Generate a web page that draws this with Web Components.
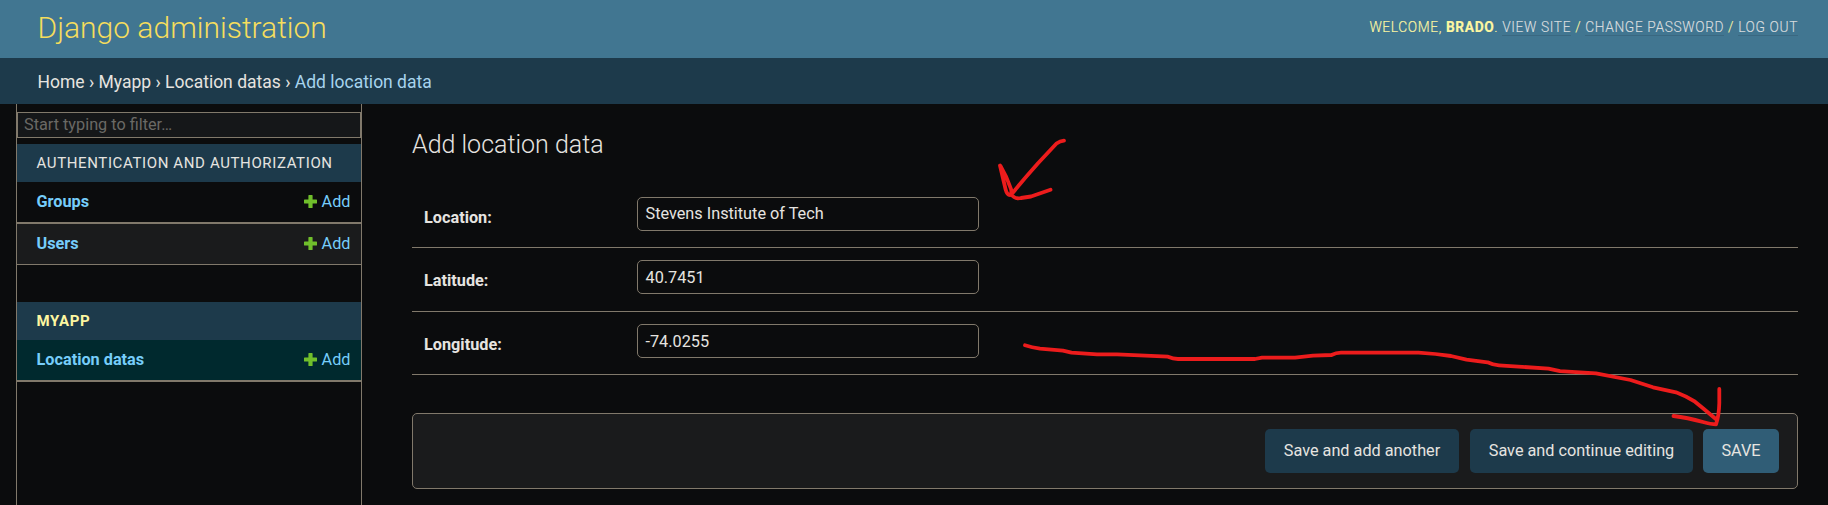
<!DOCTYPE html>
<html lang="en">
<head>
<meta charset="utf-8">
<title>Add location data | Django site admin</title>
<style>
  :root {
    --header: #417691; --bar: #1d3a4b; --body: #0b0c0d; --darker: #1a1b1c;
    --hairline: #81796b; --fg: #e6e4e0; --link: #76cdfa; --accent: #fdf7a1;
  }
  html, body { margin: 0; height: 505px; overflow: hidden; }
  body { background: var(--body); color: var(--fg); font-family: Roboto, "Liberation Sans", sans-serif; font-size: 16.25px; }
</style>
</head>
<body>
<admin-page></admin-page>
<script>
function define(name, markup, setup) {
  const template = document.createElement('template');
  template.innerHTML = markup;
  customElements.define(name, class extends HTMLElement {
    connectedCallback() {
      if (this.shadowRoot) return;
      const root = this.attachShadow({ mode: 'open' });
      root.appendChild(template.content.cloneNode(true));
      if (setup) setup(this, root);
    }
  });
}

define('site-header', `
<style>
  :host { display: flex; justify-content: space-between; height: 58px; padding: 0 30px 0 37.500px; box-sizing: border-box; background: var(--header); }
  h1 { margin: 0; font-size: 30px; line-height: 55px; font-weight: 300; color: #f5dd5d; }
  .tools { font-size: 13.75px; line-height: 55px; letter-spacing: .625px; color: var(--accent); white-space: nowrap; font-weight: 300; -webkit-text-stroke: .15px currentColor; }
  .tools a { color: #d9dddf; border-bottom: 1px solid #3a6881; }
  b { font-weight: 700; }
</style>
<h1>Django administration</h1>
<div class="tools">WELCOME, <b>BRADO</b>. <a>VIEW SITE</a> / <a>CHANGE PASSWORD</a> / <a>LOG OUT</a></div>`);

define('bread-crumbs', `
<style>
  :host { display: block; height: 46px; padding-left: 37.500px; box-sizing: border-box; background: var(--bar); font-size: 17.5px; line-height: 49px; white-space: nowrap; }
  ::slotted(a) { color: var(--fg); }
</style>
<slot></slot>`);

define('model-row', `
<style>
  :host { display: flex; box-sizing: border-box; height: 42px; padding: 0 10.500px 0 19.500px; border-bottom: 2px solid var(--hairline); justify-content: space-between; color: var(--link); line-height: 40px; }
  :host([odd]) { background: var(--darker); height: 41px; border-bottom-width: 1px; }
  :host([current]) { background: #00292e; }
  b { font-weight: 700; }
  .add { display: flex; align-items: center; gap: 5px; }
  svg { display: block; margin-bottom: 2px; }
</style>
<b><slot></slot></b>
<span class="add"><svg width="13" height="13" viewBox="0 0 13 13"><path d="M5 0h3q.6 0 .6.6V4.400h3.800q.6 0 .6.6v3q0 .6-.6.6H8.600v3.800q0 .6-.6.6H5q-.6 0-.6-.6V8.600H.6Q0 8.600 0 8V5q0-.6.6-.6h3.800V.6Q4.400 0 5 0z" fill="#70bf2b"/></svg><span>Add</span></span>`);

define('app-module', `
<style>
  :host { display: block; }
  h2 { margin: 0; height: 38px; padding-left: 19.500px; background: var(--bar); font-size: 15px; line-height: 39px; font-weight: 400; letter-spacing: .625px; white-space: nowrap; }
  :host([current]) h2 { font-weight: 700; color: var(--accent); }
</style>
<h2></h2><slot></slot>`, (host, root) => { root.querySelector('h2').textContent = host.getAttribute('caption'); });

define('nav-sidebar', `
<style>
  :host { display: flex; flex-direction: column; box-sizing: border-box; width: 346px; margin-left: 16px; padding-top: 8px; border: solid var(--hairline); border-width: 0 1px; }
  .filter { height: 26px; box-sizing: border-box; border: 1px solid var(--hairline); background: #151719; padding-left: 6px; line-height: 24px; color: #6a6965; margin-bottom: 6px; }
  .modules { display: flex; flex-direction: column; gap: 37px; }
</style>
<div class="filter">Start typing to filter…</div>
<div class="modules">
  <app-module caption="AUTHENTICATION AND AUTHORIZATION"><model-row>Groups</model-row><model-row odd>Users</model-row></app-module>
  <app-module caption="MYAPP" current><model-row current>Location datas</model-row></app-module>
</div>`);

define('form-row', `
<style>
  :host { display: flex; box-sizing: border-box; height: 64px; padding: 12px 0 0 12px; border-bottom: 1px solid var(--hairline); }
  :host([first]) { padding-top: 13px; }
  :host([last]) { height: 63px; }
  label { width: 213px; font-weight: 700; line-height: 41px; }
  .value { width: 342px; height: 34px; box-sizing: border-box; border: 1px solid var(--hairline); border-radius: 5px; padding-left: 7.500px; line-height: 33px; }
  :host([first]) .value { line-height: 31px; }
</style>
<label></label><div class="value"><slot></slot></div>`, (host, root) => { root.querySelector('label').textContent = host.getAttribute('label') + ':'; });

define('submit-button', `
<style>
  :host { display: block; box-sizing: border-box; height: 44px; border-radius: 5px; background: var(--bar); line-height: 43px; text-align: center; white-space: nowrap; }
  :host([primary]) { background: #305d76; }
</style>
<slot></slot>`);

define('submit-row', `
<style>
  :host { display: flex; justify-content: flex-end; box-sizing: border-box; height: 76px; margin-top: 38px; padding: 15px 18px; border: 1px solid var(--hairline); border-radius: 5px; background: var(--darker); }
  .a { width: 194px; margin-right: 11px; } .b { width: 223px; margin-right: 10px; } .c { width: 76px; }
</style>
<submit-button class="a">Save and add another</submit-button>
<submit-button class="b">Save and continue editing</submit-button>
<submit-button class="c" primary>SAVE</submit-button>`);

define('change-form', `
<style>
  :host { display: block; flex: 1; padding: 26px 30px 0 50px; }
  h1 { margin: 0 0 20px; height: 34px; font-size: 25px; line-height: 29px; font-weight: 300; }
</style>
<h1>Add location data</h1>
<form-row label="Location" first>Stevens Institute of Tech</form-row>
<form-row label="Latitude">40.7451</form-row>
<form-row label="Longitude" last>-74.0255</form-row>
<submit-row></submit-row>`);

define('pen-marks', `
<style>
  :host { position: absolute; left: 0; top: 0; width: 1828px; height: 505px; pointer-events: none; }
  svg { display: block; }
</style>
<svg width="1828" height="505" fill="none" stroke="#ed1c1c" stroke-width="3.800" stroke-linecap="round" stroke-linejoin="round">
  <path d="M1064 140.700Q1060 141 1056.500 143.500L1038 163.300Q1024 179 1013 192.500M1000 165.500L1005.500 189Q1007 195 1010 195Q1012 194 1011 189Q1007 177 1000.500 166M1011 193.500Q1014 199.500 1021 198L1031 196.500L1050.500 189.700"/>
  <path d="M1025 345.300Q1032 347.500 1040 348.700L1063 350.700L1071.500 352.700L1097 354.300H1117L1168 356.700Q1173 359 1178 359H1255L1262 357.700H1295L1313 355.700L1331.500 355Q1336 352.700 1341 352.700H1418.500Q1436 353.800 1451 356L1466.500 359.700L1487.500 362.300Q1493 365 1499 365.300L1548.500 368.700L1560 371.200L1596 373.300L1630.500 380L1653 387.300L1676 392.300Q1687 396.500 1695 401.700L1703 408.300L1717 420M1719.300 389V403Q1719 416 1716 424.300Q1711 424.300 1703 422Q1687 417.500 1673.500 416"/>
</svg>`);

define('admin-page', `
<style>
  :host { display: flex; flex-direction: column; height: 505px; position: relative; }
  main { display: flex; flex: 1; }
  .current { color: #a7d4ee; }
</style>
<site-header></site-header>
<bread-crumbs><a>Home</a> › <a>Myapp</a> › <a>Location datas</a> › <span class="current">Add location data</span></bread-crumbs>
<main><nav-sidebar></nav-sidebar><change-form></change-form></main>
<pen-marks></pen-marks>`);
</script>
</body>
</html>
